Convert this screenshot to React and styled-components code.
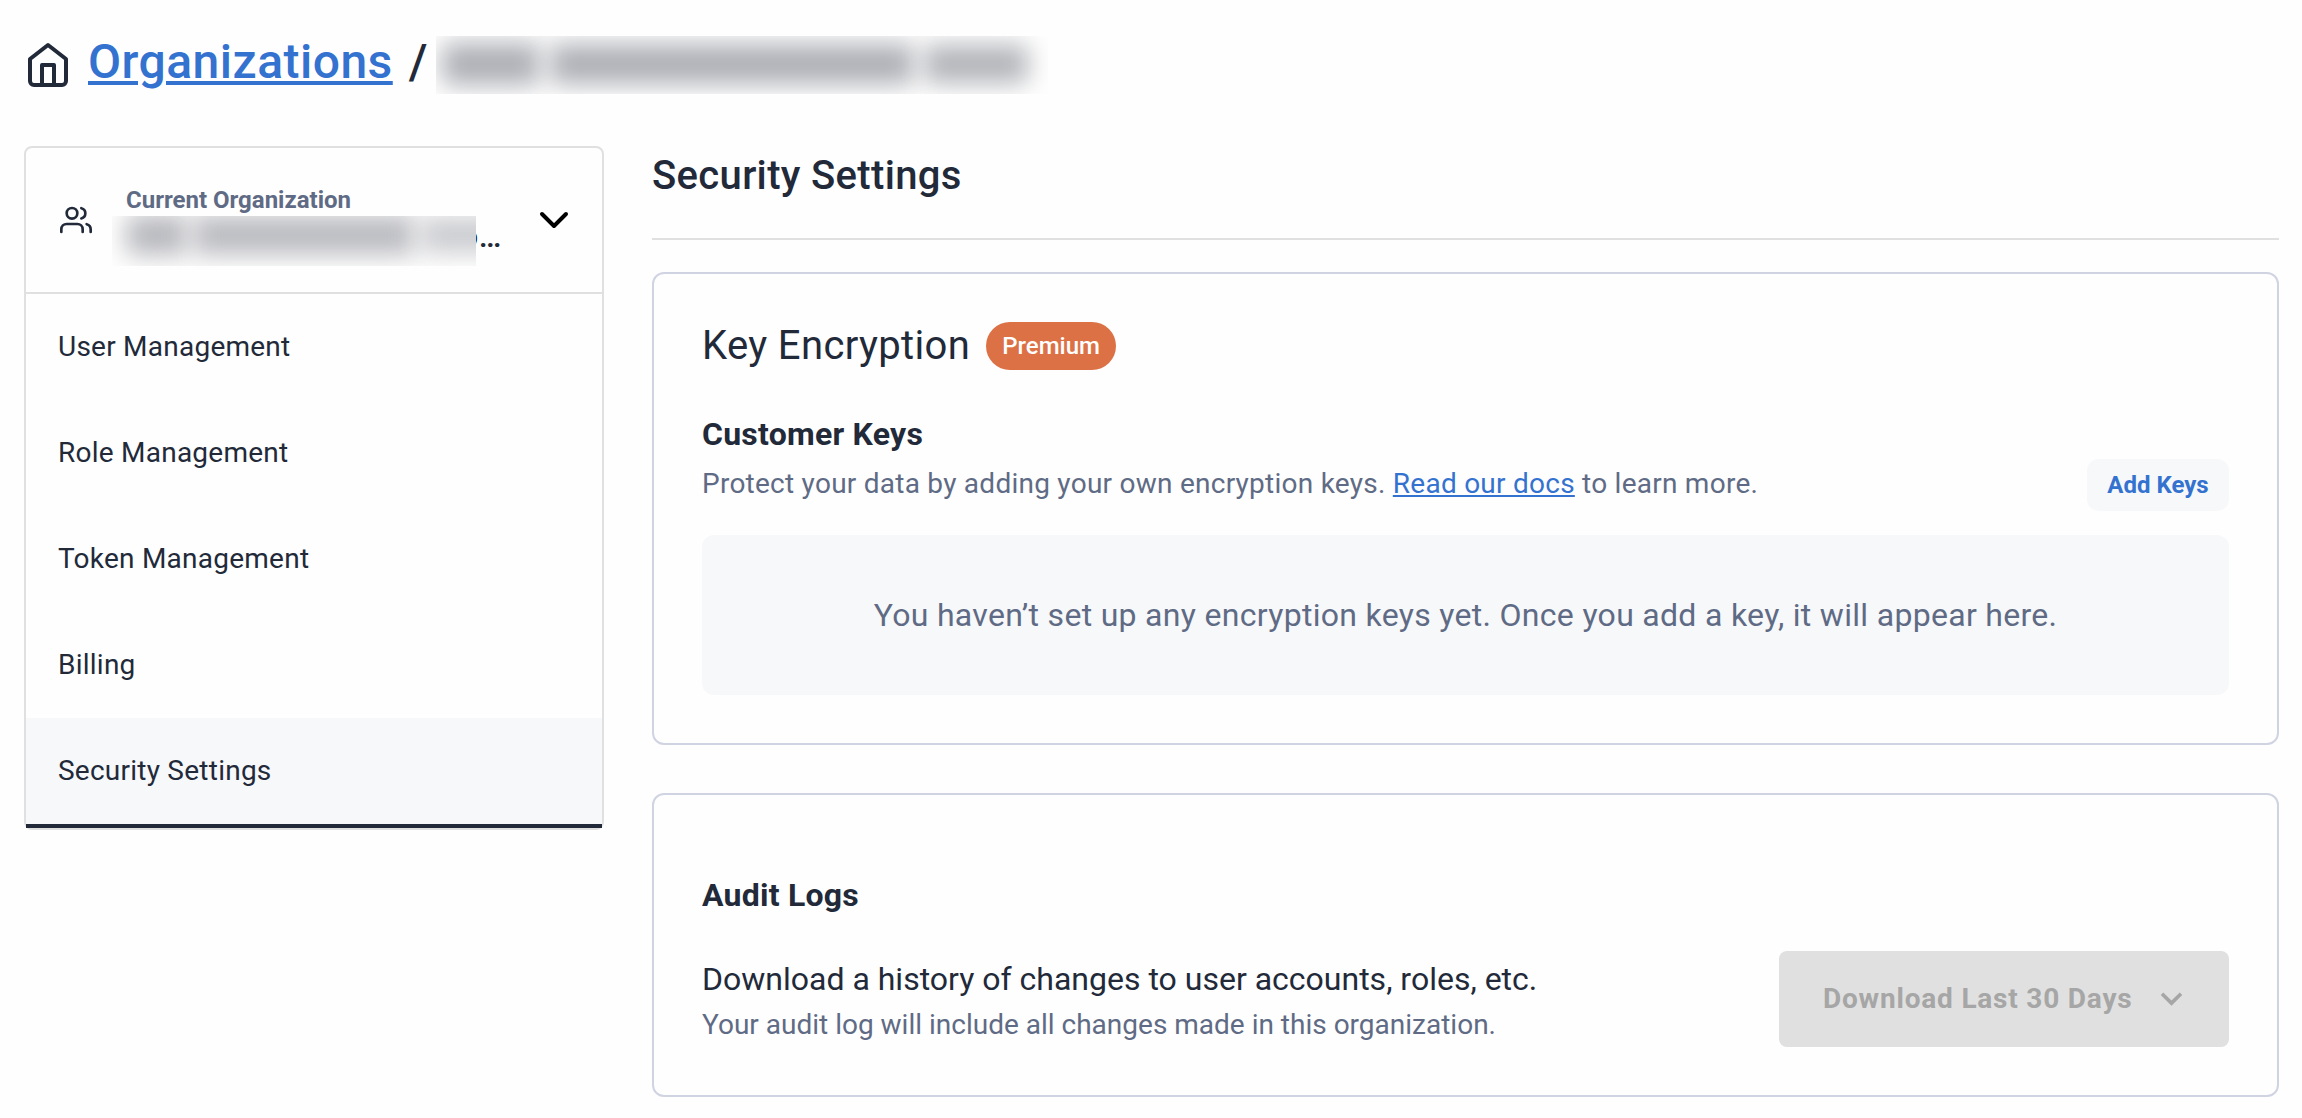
import React from "react";
import styled, { createGlobalStyle } from "styled-components";

const ink = "#222a3a";
const muted = "#5f6b85";
const link = "#3472d0";
const line = "#e0e0e0";
const wash = "#f7f8fa";

const GlobalStyle = createGlobalStyle`
  *, *::before, *::after { box-sizing: border-box; }
  body {
    margin: 0;
    background: #fefefe;
    color: ${ink};
    font-family: Roboto, "Liberation Sans", sans-serif;
  }
  h1, h2, h3, p, ul { margin: 0; padding: 0; font-weight: 400; }
`;

const Page = styled.div`
  padding: 36px 23px 21px 24px;
`;

const Breadcrumb = styled.nav`
  display: flex;
  align-items: flex-start;
  height: 110px;
  font-size: 48px;
  font-weight: 500;
  line-height: 51px;
  letter-spacing: 0.01em;
`;

const StrokeIcon = styled.svg`
  flex: none;
  width: ${(p) => p.$size}px;
  height: ${(p) => p.$size}px;
  fill: none;
  stroke: ${(p) => p.$color || ink};
  stroke-width: 2;
  stroke-linecap: round;
  stroke-linejoin: round;
`;

const HomeSlot = styled.span`
  display: flex;
  padding-top: 5px;
  margin-right: 16px;
`;

const CrumbLink = styled.a`
  color: ${link};
  text-decoration: underline;
  text-decoration-thickness: 4px;
  text-underline-offset: 3px;
`;

const Slash = styled.span`
  width: 43px;
  padding-left: 16px;
`;

const Redacted = styled.span`
  position: relative;
  z-index: 1;
  flex: none;
  display: flex;
  align-items: center;
  gap: ${(p) => p.$gap}px;
  width: ${(p) => p.$width}px;
  height: ${(p) => p.$height}px;
  padding: ${(p) => p.$pad};
  overflow: hidden;
  background: #fefefe;
`;

const Smudge = styled.span`
  flex: none;
  width: ${(p) => p.$width}px;
  height: ${(p) => p.$height}px;
  border-radius: 8px;
  background: ${(p) => p.$tone};
  filter: blur(12px);
`;

const Columns = styled.div`
  display: grid;
  grid-template-columns: 580px 1fr;
  column-gap: 48px;
  align-items: start;
`;

const Sidebar = styled.aside`
  border: 2px solid ${line};
  border-radius: 8px;
`;

const OrgPicker = styled.div`
  display: flex;
  height: 146px;
  padding: 36px 24px 0 34px;
  border-bottom: 2px solid ${line};
`;

const OrgIconSlot = styled.span`
  width: 52px;
  padding-top: 20px;
`;

const OrgText = styled.div`
  flex: 1;
  min-width: 0;
`;

const OrgCaption = styled.p`
  padding-left: 14px;
  color: ${muted};
  font-size: 24px;
  font-weight: 700;
  line-height: 32px;
`;

const OrgName = styled.p`
  display: flex;
  align-items: flex-start;
  font-size: 32px;
  font-weight: 500;
  line-height: 40px;
  letter-spacing: 0.5px;
`;

const OrgTail = styled.span`
  margin-left: -16px;
`;

const ChevronSlot = styled.span`
  flex: none;
  display: flex;
  padding-top: 12px;
`;

const Menu = styled.ul`
  list-style: none;
`;

const MenuItem = styled.li`
  padding: 0 32px 1px;
  font-size: 28px;
  line-height: 105px;
  letter-spacing: 0.24px;
  background: ${(p) => (p.$active ? wash : "transparent")};
  border-bottom: ${(p) => (p.$active ? `4px solid ${ink}` : "0")};
`;

const Main = styled.main`
  display: flex;
  flex-direction: column;
`;

const PageTitle = styled.h1`
  padding: 5px 0 38px;
  margin-bottom: 32px;
  border-bottom: 2px solid ${line};
  font-size: 40px;
  font-weight: 500;
  line-height: 49px;
  letter-spacing: 0.34px;
`;

const Card = styled.section`
  padding: ${(p) => p.$top}px 48px 48px;
  border: 2px solid #d0d4e2;
  border-radius: 12px;
  & + & { margin-top: 48px; }
`;

const CardHeading = styled.div`
  display: flex;
  align-items: flex-start;
  gap: 16px;
  margin-bottom: 44px;
`;

const CardTitle = styled.h2`
  font-size: 40px;
  line-height: 47px;
  letter-spacing: 0.36px;
`;

const Badge = styled.span`
  height: 48px;
  padding: 0 16px;
  border-radius: 24px;
  background: #dc7145;
  color: #fff;
  font-size: 24px;
  font-weight: 500;
  line-height: 48px;
`;

const SubTitle = styled.h3`
  font-size: 32px;
  font-weight: 700;
  line-height: 40px;
  letter-spacing: 0.0075em;
`;

const Row = styled.div`
  display: flex;
  justify-content: space-between;
  align-items: flex-end;
  margin-top: ${(p) => p.$top || 0}px;
`;

const KeysText = styled.div`
  display: flex;
  flex-direction: column;
  gap: 10px;
  padding-bottom: 8px;
`;

const LogsText = styled.div`
  display: flex;
  flex-direction: column;
  gap: 3px;
  padding-bottom: 2px;
`;

const Body = styled.p`
  font-size: 32px;
  line-height: 44px;
`;

const Note = styled.p`
  color: ${muted};
  font-size: 28px;
  line-height: ${(p) => p.$leading}px;
  letter-spacing: ${(p) => p.$spacing || "normal"};
`;

const DocsLink = styled.a`
  color: ${link};
  text-decoration: underline;
  text-decoration-thickness: 2px;
  text-underline-offset: 2px;
`;

const SoftButton = styled.button`
  width: 142px;
  height: 52px;
  padding: 0;
  border: 0;
  border-radius: 12px;
  background: ${wash};
  color: ${link};
  font: 700 24px/52px Roboto, sans-serif;
`;

const EmptyState = styled.div`
  margin-top: 24px;
  border-radius: 12px;
  background: ${wash};
  color: ${muted};
  font-size: 32px;
  line-height: 160px;
  letter-spacing: 0.00938em;
  text-align: center;
`;

const DisabledButton = styled.button`
  display: flex;
  align-items: center;
  justify-content: space-between;
  width: 450px;
  height: 96px;
  padding: 0 36px 1px 44px;
  border: 0;
  border-radius: 8px;
  background: ${line};
  color: #a6a6a6;
  font: 700 28px/95px Roboto, sans-serif;
  letter-spacing: 0.02857em;
`;

const CaretIcon = styled.svg`
  width: 43px;
  height: 43px;
  fill: currentColor;
`;

const menu = [
  "User Management",
  "Role Management",
  "Token Management",
  "Billing",
  "Security Settings",
];

export default function App() {
  return (
    <>
      <GlobalStyle />
      <Page>
        <Breadcrumb>
          <HomeSlot>
            <StrokeIcon $size={48} viewBox="0 0 24 24">
              <path d="M3 9l9-7 9 7v11a2 2 0 0 1-2 2H5a2 2 0 0 1-2-2z" />
              <polyline points="9 22 9 12 15 12 15 22" />
            </StrokeIcon>
          </HomeSlot>
          <CrumbLink>Organizations</CrumbLink>
          <Slash>/</Slash>
          <Redacted $width={612} $height={58} $gap={10} $pad="0 0 2px 6px">
            <Smudge $width={98} $height={42} $tone="#aeb0b6" />
            <Smudge $width={364} $height={40} $tone="#aeb0b6" />
            <Smudge $width={104} $height={38} $tone="#b2b4b9" />
          </Redacted>
        </Breadcrumb>
        <Columns>
          <Sidebar>
            <OrgPicker>
              <OrgIconSlot>
                <StrokeIcon $size={32} viewBox="0 0 24 24">
                  <path d="M17 21v-2a4 4 0 0 0-4-4H5a4 4 0 0 0-4 4v2" />
                  <circle cx="9" cy="7" r="4" />
                  <path d="M23 21v-2a4 4 0 0 0-3-3.87" />
                  <path d="M16 3.13a4 4 0 0 1 0 7.75" />
                </StrokeIcon>
              </OrgIconSlot>
              <OrgText>
                <OrgCaption>Current Organization</OrgCaption>
                <OrgName>
                  <Redacted $width={364} $height={50} $gap={5} $pad="0 0 12px 14px">
                    <Smudge $width={62} $height={40} $tone="#b8b9be" />
                    <Smudge $width={222} $height={40} $tone="#bbbcc1" />
                    <Smudge $width={90} $height={36} $tone="#cbccd0" />
                  </Redacted>
                  <OrgTail>o…</OrgTail>
                </OrgName>
              </OrgText>
              <ChevronSlot>
                <StrokeIcon $size={48} $color="#000" viewBox="0 0 24 24">
                  <polyline points="6 9 12 15 18 9" />
                </StrokeIcon>
              </ChevronSlot>
            </OrgPicker>
            <Menu>
              {menu.map((label) => (
                <MenuItem key={label} $active={label === "Security Settings"}>
                  {label}
                </MenuItem>
              ))}
            </Menu>
          </Sidebar>
          <Main>
            <PageTitle>Security Settings</PageTitle>
            <Card $top={48}>
              <CardHeading>
                <CardTitle>Key Encryption</CardTitle>
                <Badge>Premium</Badge>
              </CardHeading>
              <Row>
                <KeysText>
                  <SubTitle>Customer Keys</SubTitle>
                  <Note $leading={39} $spacing="0.25px">
                    Protect your data by adding your own encryption keys.{" "}
                    <DocsLink>Read our docs</DocsLink> to learn more.
                  </Note>
                </KeysText>
                <SoftButton>Add Keys</SoftButton>
              </Row>
              <EmptyState>
                You haven’t set up any encryption keys yet. Once you add a key, it will appear here.
              </EmptyState>
            </Card>
            <Card $top={80}>
              <SubTitle>Audit Logs</SubTitle>
              <Row $top={36}>
                <LogsText>
                  <Body>Download a history of changes to user accounts, roles, etc.</Body>
                  <Note $leading={41}>
                    Your audit log will include all changes made in this organization.
                  </Note>
                </LogsText>
                <DisabledButton disabled>
                  Download Last 30 Days
                  <CaretIcon viewBox="0 0 24 24">
                    <path d="M7.41 8.59 12 13.17l4.59-4.58L18 10l-6 6-6-6z" />
                  </CaretIcon>
                </DisabledButton>
              </Row>
            </Card>
          </Main>
        </Columns>
      </Page>
    </>
  );
}
